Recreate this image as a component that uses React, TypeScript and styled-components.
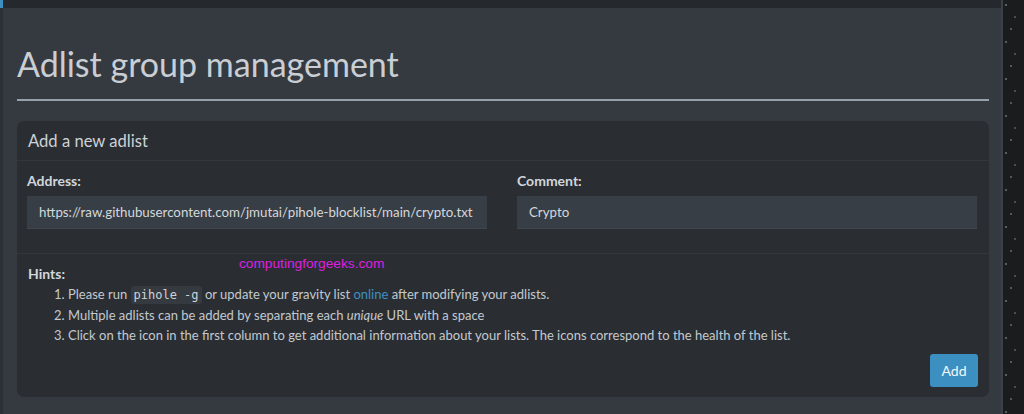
import React from "react";
import styled, { createGlobalStyle } from "styled-components";

const GlobalStyle = createGlobalStyle`
  html, body { margin: 0; padding: 0; }
  body {
    background: #1b1c1e;
    font-family: Lato, "Noto Sans", sans-serif;
    color: #c3c9cf;
    width: 1024px;
    height: 414px;
    overflow: hidden;
  }
  * { box-sizing: border-box; }
`;

const Page = styled.div`
  display: flex;
  width: 1024px;
  height: 414px;
  position: relative;
`;

const LeftStrip = styled.div`
  width: 3px;
  flex: none;
  background: linear-gradient(#3d8fc1 0 8px, #2b3036 8px);
`;

const Column = styled.div`
  width: 1000px;
  flex: none;
  display: flex;
  flex-direction: column;
  background: #353a41;
  border-right: 2px solid #3b4148;
`;

const TopBar = styled.div`
  height: 8px;
  background: #25282c;
`;

const Main = styled.main`
  padding: 0 12px 0 14px;
  display: flex;
  flex-direction: column;
`;

const Title = styled.h1`
  margin: 0;
  padding-top: 32px;
  height: 90px;
  font-size: 34px;
  font-weight: 400;
  line-height: 48px;
  color: #c9ced4;
`;

const Rule = styled.hr`
  margin: 1px 0 20px;
  border: 0;
  height: 2px;
  background: #98a1aa;
`;

const Card = styled.section`
  background: #2a2e33;
  border-radius: 7px;
  display: flex;
  flex-direction: column;
  position: relative;
`;

const CardHeader = styled.header`
  height: 40px;
  padding: 0 11px;
  display: flex;
  align-items: center;
  font-size: 16.6px;
  color: #cdd2d7;
  border-bottom: 1px solid #33383e;
`;

const CardBody = styled.div`
  padding: 10px 12px 24px 10px;
  display: grid;
  grid-template-columns: minmax(0, 1fr) minmax(0, 1fr);
  column-gap: 30px;
`;

const Field = styled.div`
  display: flex;
  flex-direction: column;
  min-width: 0;
`;

const Label = styled.label`
  font-size: 14px;
  font-weight: 700;
  line-height: 20px;
  color: #d2d6da;
  margin-bottom: 5px;
`;

const Input = styled.div`
  height: 33px;
  background: #383e45;
  border-bottom: 1px solid #40464d;
  padding: 0 12px;
  display: flex;
  align-items: center;
  font-size: 13.3px;
  color: #d4d8dc;
  white-space: nowrap;
  overflow: hidden;
`;

const CardFooter = styled.div`
  border-top: 1px solid #33383e;
  padding: 10px 11px 10px 11px;
  display: flex;
  flex-direction: column;
  font-size: 13px;
  line-height: 20px;
`;

const HintsTitle = styled.strong`
  color: #d2d6da;
  font-size: 14px;
`;

const HintList = styled.ol`
  margin: 0 0 9px;
  padding-left: 40px;
  color: #c3c9cf;
  font-size: 13px;
`;

const Code = styled.code`
  font-family: Menlo, "DejaVu Sans Mono", monospace;
  font-size: 12px;
  background: #353a40;
  color: #cfd3d7;
  padding: 2px 3px;
  border-radius: 3px;
`;

const Link = styled.a`
  color: #3f8fc2;
  text-decoration: none;
`;

const ButtonRow = styled.div`
  display: flex;
  justify-content: flex-end;
`;

const AddButton = styled.button`
  height: 33px;
  width: 48px;
  border: 0;
  border-radius: 3px;
  background: #3c8fc1;
  color: #f4f7fa;
  font-family: inherit;
  font-size: 14px;
  padding: 0;
`;

const Watermark = styled.div`
  position: absolute;
  left: 222px;
  top: 135px;
  font-family: "Liberation Sans", Arial, sans-serif;
  font-size: 13.7px;
  color: #dd1fe0;
`;

const Starfield = styled.div`
  flex: 1;
  background-color: #1b1c1e;
  background-image:
    radial-gradient(circle at 3px 5px, #5a5d60 0.8px, transparent 1.2px),
    radial-gradient(circle at 12px 17px, #4a4d50 0.8px, transparent 1.2px),
    radial-gradient(circle at 8px 29px, #55585b 0.7px, transparent 1.1px);
  background-size: 19px 37px, 19px 37px, 19px 37px;
`;

export default function App() {
  return (
    <>
      <GlobalStyle />
      <Page>
        <LeftStrip />
        <Column>
          <TopBar />
          <Main>
            <Title>Adlist group management</Title>
            <Rule />
            <Card>
              <CardHeader>Add a new adlist</CardHeader>
              <CardBody>
                <Field>
                  <Label>Address:</Label>
                  <Input>https://raw.githubusercontent.com/jmutai/pihole-blocklist/main/crypto.txt</Input>
                </Field>
                <Field>
                  <Label>Comment:</Label>
                  <Input>Crypto</Input>
                </Field>
              </CardBody>
              <CardFooter>
                <HintsTitle>Hints:</HintsTitle>
                <HintList>
                  <li>
                    Please run <Code>pihole -g</Code> or update your gravity list{" "}
                    <Link href="#">online</Link> after modifying your adlists.
                  </li>
                  <li>
                    Multiple adlists can be added by separating each <em>unique</em> URL with a space
                  </li>
                  <li>
                    Click on the icon in the first column to get additional information about your lists. The icons correspond to the health of the list.
                  </li>
                </HintList>
                <ButtonRow>
                  <AddButton>Add</AddButton>
                </ButtonRow>
              </CardFooter>
              <Watermark>computingforgeeks.com</Watermark>
            </Card>
          </Main>
        </Column>
        <Starfield />
      </Page>
    </>
  );
}
